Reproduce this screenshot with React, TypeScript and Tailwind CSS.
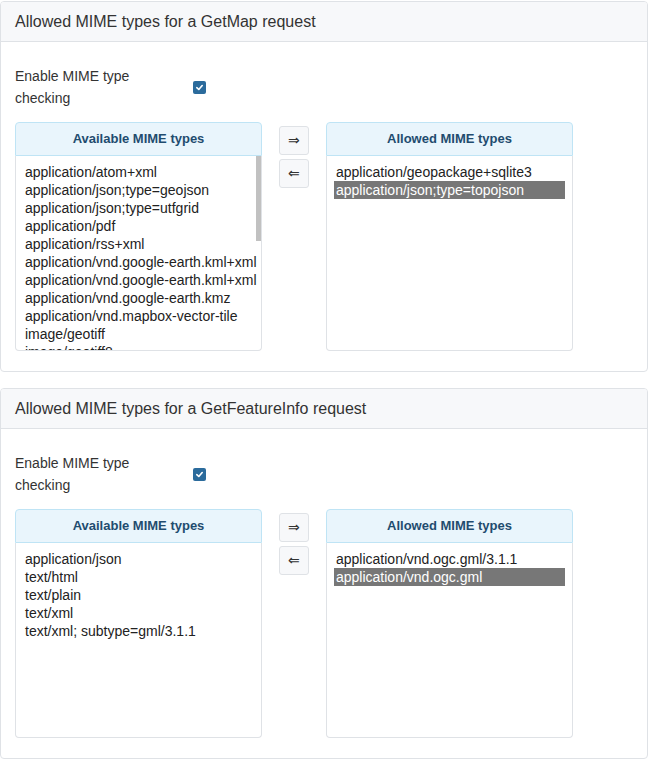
import React from "react";

const font = { fontFamily: '"Liberation Sans", Arial, sans-serif' };

function ListBox({
  title,
  items,
  selected,
  scrollbar,
}: {
  title: string;
  items: string[];
  selected?: number;
  scrollbar?: boolean;
}) {
  return (
    <div className="w-[247px] h-[229px] flex flex-col shrink-0">
      <div className="h-[34px] shrink-0 bg-[#e9f5fc] border border-[#bfe4f5] rounded-t-[4px] flex items-center justify-center text-[13px] font-bold text-[#1f4c6f]">
        {title}
      </div>
      <div className="relative flex-1 border border-t-0 border-[#dfe2e6] rounded-b-[4px] overflow-hidden bg-white">
        <div className="px-[7px] pt-[7px]">
          {items.map((it, i) => (
            <div
              key={i}
              className={
                "h-[18px] leading-[18px] px-[2px] text-[14px] whitespace-nowrap " +
                (i === selected ? "bg-[#777777] text-white" : "text-[#222]")
              }
            >
              {it}
            </div>
          ))}
        </div>
        {scrollbar && (
          <div className="absolute right-0 top-0 w-[5px] h-[85px] bg-[#c1c1c1]" />
        )}
      </div>
    </div>
  );
}

function Card({
  title,
  left,
  right,
  leftScroll,
}: {
  title: string;
  left: string[];
  right: string[];
  leftScroll?: boolean;
}) {
  return (
    <div className="border border-[#dfe2e6] rounded-[4px] bg-white overflow-hidden">
      <div className="h-[40px] bg-[#f7f8fa] border-b border-[#dfe2e6] flex items-center px-[14px] text-[16px] text-[#333]">
        {title}
      </div>
      <div className="px-[14px] pt-[23px] pb-[20px]">
        <div className="flex items-center">
          <div className="w-[130px] text-[14px] leading-[22px] text-[#333]">
            Enable MIME type checking
          </div>
          <div className="ml-[48px] w-[13px] h-[13px] rounded-[2px] bg-[#2b6b9c] flex items-center justify-center">
            <svg width="9" height="9" viewBox="0 0 10 10">
              <path
                d="M2 5.2 L4.2 7.2 L8 2.8"
                fill="none"
                stroke="white"
                strokeWidth="1.8"
                strokeLinecap="round"
                strokeLinejoin="round"
              />
            </svg>
          </div>
        </div>
        <div className="flex mt-[13px]">
          <ListBox
            title="Available MIME types"
            items={left}
            scrollbar={leftScroll}
          />
          <div className="flex flex-col gap-[4px] mx-[17px] pt-[4px]">
            <button className="w-[30px] h-[29px] bg-[#f7f8fa] border border-[#dfe2e6] rounded-[3px] flex items-center justify-center text-[14px] text-[#333]">
              ⇒
            </button>
            <button className="w-[30px] h-[29px] bg-[#f7f8fa] border border-[#dfe2e6] rounded-[3px] flex items-center justify-center text-[14px] text-[#333]">
              ⇐
            </button>
          </div>
          <ListBox title="Allowed MIME types" items={right} selected={1} />
        </div>
      </div>
    </div>
  );
}

export default function App() {
  return (
    <div className="pt-px w-[650px] bg-white" style={font}>
      <div className="w-[648px] flex flex-col gap-[16px]">
        <Card
          title="Allowed MIME types for a GetMap request"
          leftScroll
          left={[
            "application/atom+xml",
            "application/json;type=geojson",
            "application/json;type=utfgrid",
            "application/pdf",
            "application/rss+xml",
            "application/vnd.google-earth.kml+xml",
            "application/vnd.google-earth.kml+xml",
            "application/vnd.google-earth.kmz",
            "application/vnd.mapbox-vector-tile",
            "image/geotiff",
            "image/geotiff8",
            "image/gif",
          ]}
          right={[
            "application/geopackage+sqlite3",
            "application/json;type=topojson",
          ]}
        />
        <Card
          title="Allowed MIME types for a GetFeatureInfo request"
          left={[
            "application/json",
            "text/html",
            "text/plain",
            "text/xml",
            "text/xml; subtype=gml/3.1.1",
          ]}
          right={["application/vnd.ogc.gml/3.1.1", "application/vnd.ogc.gml"]}
        />
      </div>
    </div>
  );
}
